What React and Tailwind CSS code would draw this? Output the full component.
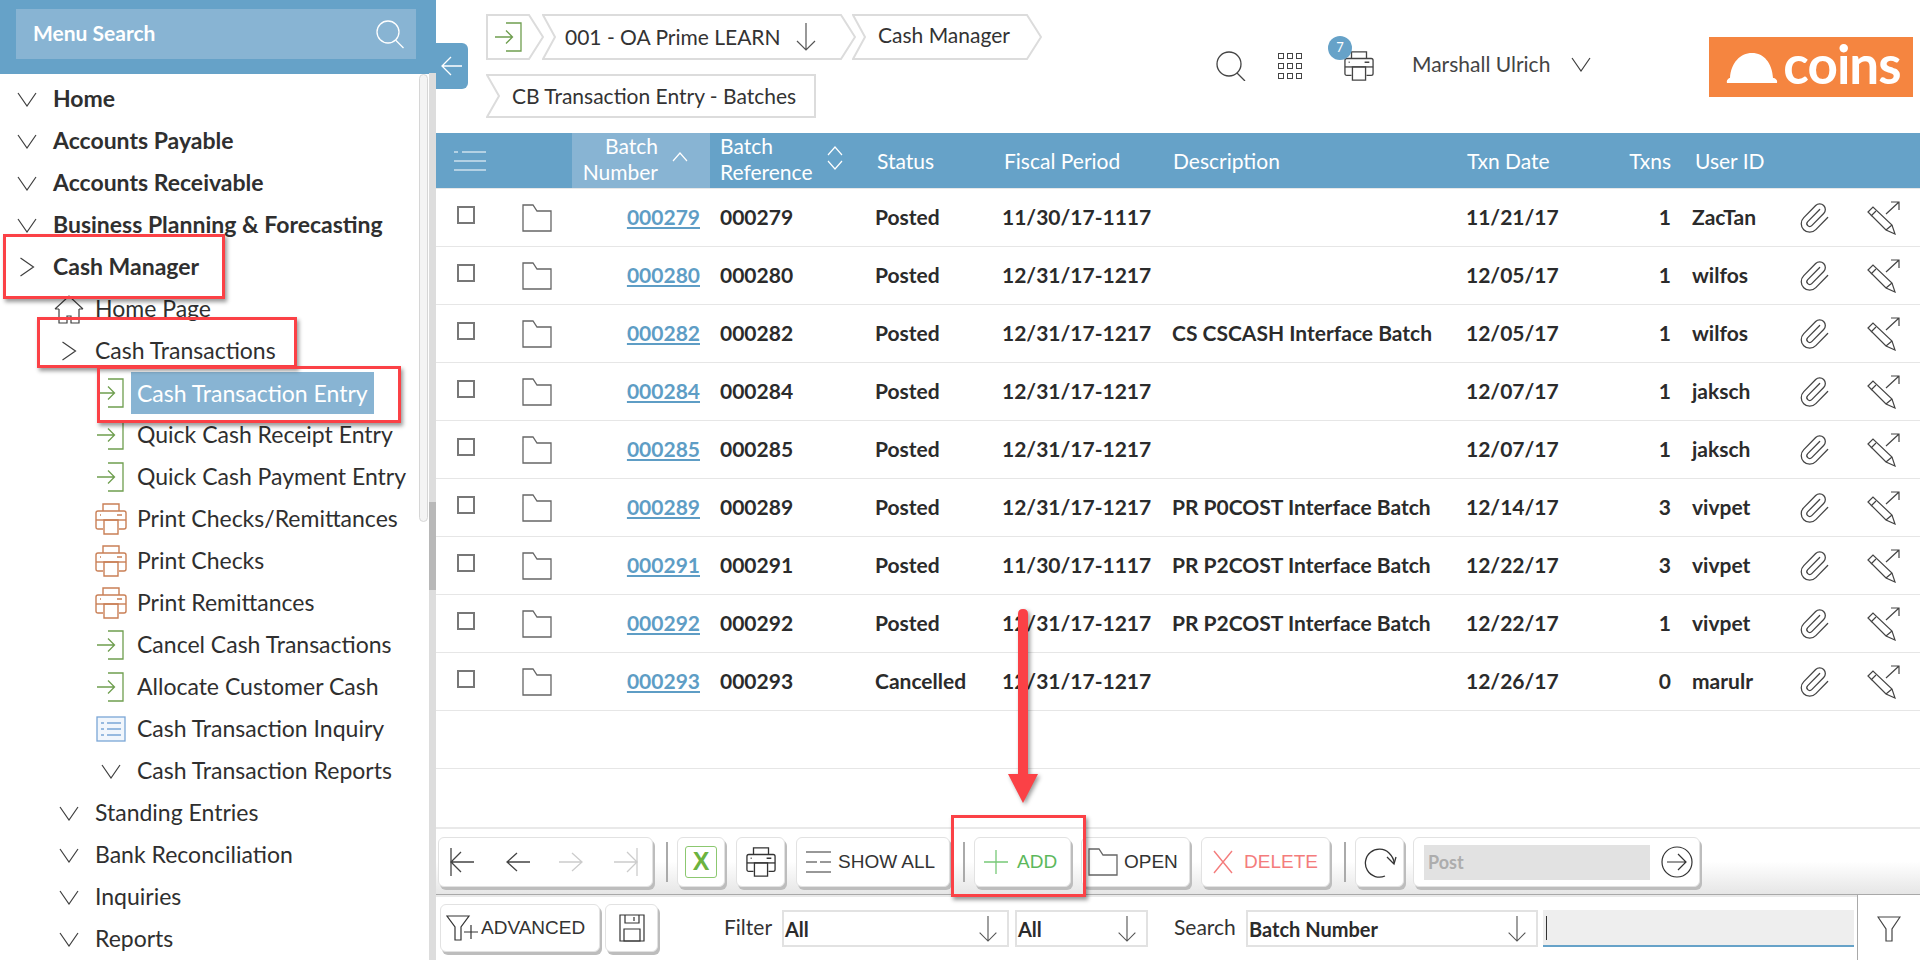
import { Paperclip } from "lucide-react";

const lato = { fontFamily: "Lato, sans-serif" };

function Chevron({ dir = "down", className = "" }) {
  if (dir === "right") {
    return (
      <svg width="16" height="20" viewBox="0 0 16 20" className={className} fill="none" stroke="#3f3f3f" strokeWidth="1.2">
        <path d="M1.5 1 L14.5 10 L1.5 19" />
      </svg>
    );
  }
  return (
    <svg width="20" height="15" viewBox="0 0 20 15" className={className} fill="none" stroke="#3f3f3f" strokeWidth="1.2">
      <path d="M1 1 L10 14 L19 1" />
    </svg>
  );
}

function EnterIcon() {
  return (
    <svg width="30" height="30" viewBox="0 0 30 30" fill="none" stroke="#6f9e4f" strokeWidth="1.3">
      <path d="M12 1 H27 V29 H12" />
      <path d="M1 15 H18 M12 8.5 L18.5 15 L12 21.5" />
    </svg>
  );
}

function PrinterIcon({ color = "#c97f55", size = 32 }) {
  return (
    <svg width={size} height={size} viewBox="0 0 32 32" fill="none" stroke={color} strokeWidth="1.4">
      <path d="M8 8 V1 H24 V8" />
      <path d="M8 26 H3 Q1 26 1 24 V10 Q1 8 3 8 H29 Q31 8 31 10 V24 Q31 26 29 26 H24" />
      <path d="M9 17 H23 V31 H9 Z" />
      <path d="M1 17 H31" />
      <path d="M5 12 H6 M22 12 H27" />
    </svg>
  );
}

function ListIcon() {
  return (
    <svg width="30" height="26" viewBox="0 0 30 26" fill="#f1f6fc" stroke="#7aa6d6" strokeWidth="1.3">
      <rect x="1" y="1" width="28" height="24" />
      <path d="M5 7 H8 M11 7 H25 M5 13 H8 M11 13 H25 M5 19 H8 M11 19 H25" />
    </svg>
  );
}

function HouseIcon() {
  return (
    <svg width="30" height="29" viewBox="0 0 30 29" fill="none" stroke="#3f3f3f" strokeWidth="1.2">
      <path d="M1 14 L15 1 L29 14 M1 14 H5 M25 14 H29" />
      <path d="M5 14 V28 H13 V21 H17 V28 H25 V14" />
    </svg>
  );
}

function FolderIcon({ w = 30, h = 28, color = "#666" }) {
  return (
    <svg width={w} height={h} viewBox="0 0 30 28" fill="none" stroke={color} strokeWidth="1.3" preserveAspectRatio="none">
      <path d="M1 1 H11 L15 7 H29 V27 H1 Z" />
    </svg>
  );
}

function PencilIcon() {
  return (
    <svg width="34" height="34" viewBox="0 0 34 34" fill="none" stroke="#444" strokeWidth="1.2">
      <path d="M20 13 L33 1 M25 1 H33 V9" />
      <path d="M2 11 L7 6 L26 24 L29 33 L20 29 Z" />
      <path d="M5 15 L10 10 M20 29 L26 24" />
    </svg>
  );
}

function DownArrow({ w = 20, h = 28 }) {
  return (
    <svg width={w} height={h} viewBox="0 0 20 28" fill="none" stroke="#555" strokeWidth="1.2">
      <path d="M10 0 V27 M1 18 L10 27 L19 18" />
    </svg>
  );
}

function HArrow({ dir = "left", bar = false, color = "#444" }) {
  return (
    <svg width="26" height="30" viewBox="0 0 26 30" fill="none" stroke={color} strokeWidth="1.3" className={dir === "right" ? "-scale-x-100" : ""}>
      {bar && <path d="M2 1 V29" />}
      <path d={bar ? "M2 15 H25 M12 5 L2 15 L12 25" : "M2 15 H25 M12 6 L2 15 L12 24"} />
    </svg>
  );
}

function Crumb({ w, h, notch = true, point = true, children, className = "" }) {
  const t = w - 1;
  const b = h - 1;
  const m = h / 2;
  const right = point ? `L${w - 15} 1 L${t} ${m} L${w - 15} ${b}` : `L${t} 1 L${t} ${b}`;
  const left = notch ? `L1 ${b} L13 ${m}` : `L1 ${b}`;
  return (
    <div className={`relative flex items-center shrink-0 ${className}`} style={{ width: w, height: h }}>
      <svg width={w} height={h} className="absolute inset-0" fill="none" stroke="#dcdcdc" strokeWidth="2">
        <path d={`M1 1 ${right} ${left} Z`} />
      </svg>
      <div className="relative flex items-center w-full">{children}</div>
    </div>
  );
}

const menu = [
  { label: "Home", level: 0, icon: "down", bold: true },
  { label: "Accounts Payable", level: 0, icon: "down", bold: true },
  { label: "Accounts Receivable", level: 0, icon: "down", bold: true },
  { label: "Business Planning & Forecasting", level: 0, icon: "down", bold: true },
  { label: "Cash Manager", level: 0, icon: "right", bold: true },
  { label: "Home Page", level: 1, icon: "house" },
  { label: "Cash Transactions", level: 1, icon: "right" },
  { label: "Cash Transaction Entry", level: 2, icon: "enter", active: true },
  { label: "Quick Cash Receipt Entry", level: 2, icon: "enter" },
  { label: "Quick Cash Payment Entry", level: 2, icon: "enter" },
  { label: "Print Checks/Remittances", level: 2, icon: "print" },
  { label: "Print Checks", level: 2, icon: "print" },
  { label: "Print Remittances", level: 2, icon: "print" },
  { label: "Cancel Cash Transactions", level: 2, icon: "enter" },
  { label: "Allocate Customer Cash", level: 2, icon: "enter" },
  { label: "Cash Transaction Inquiry", level: 2, icon: "list" },
  { label: "Cash Transaction Reports", level: 2, icon: "down" },
  { label: "Standing Entries", level: 1, icon: "down" },
  { label: "Bank Reconciliation", level: 1, icon: "down" },
  { label: "Inquiries", level: 1, icon: "down" },
  { label: "Reports", level: 1, icon: "down" },
];

const rows = [
  ["000279", "Posted", "11/30/17-1117", "", "11/21/17", "1", "ZacTan"],
  ["000280", "Posted", "12/31/17-1217", "", "12/05/17", "1", "wilfos"],
  ["000282", "Posted", "12/31/17-1217", "CS CSCASH Interface Batch", "12/05/17", "1", "wilfos"],
  ["000284", "Posted", "12/31/17-1217", "", "12/07/17", "1", "jaksch"],
  ["000285", "Posted", "12/31/17-1217", "", "12/07/17", "1", "jaksch"],
  ["000289", "Posted", "12/31/17-1217", "PR P0COST Interface Batch", "12/14/17", "3", "vivpet"],
  ["000291", "Posted", "11/30/17-1117", "PR P2COST Interface Batch", "12/22/17", "3", "vivpet"],
  ["000292", "Posted", "12/31/17-1217", "PR P2COST Interface Batch", "12/22/17", "1", "vivpet"],
  ["000293", "Cancelled", "12/31/17-1217", "", "12/26/17", "0", "marulr"],
];

function MenuIcon({ icon }) {
  if (icon === "down") return <Chevron />;
  if (icon === "right") return <Chevron dir="right" />;
  if (icon === "house") return <HouseIcon />;
  if (icon === "enter") return <EnterIcon />;
  if (icon === "print") return <PrinterIcon />;
  return <ListIcon />;
}

function Sidebar() {
  return (
    <aside className="relative w-[436px] h-full shrink-0 overflow-hidden">
      <div className="h-[74px] bg-[#66a2c8] pt-[9px] pl-4">
        <div className="flex items-center justify-between w-[400px] h-[50px] bg-[#88b4d3] pl-[17px] pr-3">
          <span className="text-[21px] font-bold text-white -mt-[2px]">Menu Search</span>
          <svg width="28" height="29" viewBox="0 0 28 29" fill="none" stroke="#fff" strokeWidth="1.3">
            <circle cx="12" cy="12" r="11" />
            <path d="M19.5 20 L27.5 28" />
          </svg>
        </div>
      </div>
      <div className="pt-1">
        {menu.map((m) => (
          <div
            key={m.label}
            className={`flex items-center h-[42px] text-[#2f2f2f] ${m.level === 1 ? "ml-[42px]" : m.level === 2 ? "ml-[84px]" : ""}`}
          >
            <div className="w-[53px] flex justify-center shrink-0">
              <MenuIcon icon={m.icon} />
            </div>
            {m.active ? (
              <span className="-ml-[6px] flex items-center h-[42px] px-[6px] bg-[#88b4d3] text-white text-[23px]">{m.label}</span>
            ) : (
              <span className={m.bold ? "text-[23px] font-bold whitespace-nowrap -mt-px" : "text-[23px] whitespace-nowrap -mt-px"}>{m.label}</span>
            )}
          </div>
        ))}
      </div>
      <div className="absolute right-0 top-[73px] bottom-0 w-[7px] bg-[#dddddd]">
        <div className="absolute top-[429px] w-full h-[88px] bg-[#b8b8b8]" />
      </div>
      <div className="absolute left-[419px] top-[74px] w-[9px] h-[448px] rounded-full bg-[#f4f4f4] border border-[#d6d6d6]" />
    </aside>
  );
}

function TopBar() {
  return (
    <div className="relative h-[133px] shrink-0">
      <div className="absolute left-0 top-[43px] w-8 h-[46px] rounded-r-md bg-[#66a2c8] flex items-center justify-center">
        <svg width="22" height="22" viewBox="0 0 22 22" fill="none" stroke="#fff" strokeWidth="1.3">
          <path d="M1 11 H21 M10 2 L1 11 L10 20" />
        </svg>
      </div>
      <div className="flex pt-[14px] pl-[50px]">
        <div className="w-[606px] flex flex-col gap-[14px]">
          <div className="flex h-[46px]">
            <Crumb w={58} h={46} notch={false}>
              <div className="ml-2"><EnterIcon /></div>
            </Crumb>
            <Crumb w={314} h={46} className="-ml-[2px]">
              <span className="ml-[23px] text-[21px] text-[#333]">001 - OA Prime LEARN</span>
              <div className="ml-[15px]"><DownArrow /></div>
            </Crumb>
            <Crumb w={190} h={46} className="-ml-1">
              <span className="ml-[26px] -mt-1 text-[21px] text-[#333]">Cash Manager</span>
            </Crumb>
          </div>
          <Crumb w={330} h={44} point={false}>
            <span className="ml-[26px] -mt-[1px] text-[21px] text-[#333]">CB Transaction Entry - Batches</span>
          </Crumb>
        </div>
        <div className="flex items-start pt-[23px]">
          <svg width="30" height="30" viewBox="0 0 30 30" fill="none" stroke="#444" strokeWidth="1.3" className="ml-[124px] mt-[14px]">
            <circle cx="13" cy="13" r="12" />
            <path d="M21 22 L29 30" />
          </svg>
          <div className="ml-[32px] grid grid-cols-3 gap-x-[3px] gap-y-[4px] mt-[16px]">
            {[1, 2, 3, 4, 5, 6, 7, 8, 9].map((i) => (
              <div key={i} className="w-[6px] h-[6px] border border-[#444]" />
            ))}
          </div>
          <div className="relative ml-[42px] mt-[14px]">
            <PrinterIcon color="#444" size={30} />
            <div className="absolute -left-[16px] -top-[15px] w-6 h-6 rounded-full bg-[#66a2c8] flex items-center justify-center text-white text-[13px]">7</div>
          </div>
          <span className="ml-[38px] text-[21px] text-[#444] mt-[11px] whitespace-nowrap">Marshall Ulrich</span>
          <Chevron className="ml-[21px] mt-[20px]" />
          <div className="relative ml-[118px] w-[204px] h-[60px] bg-[#f58540] flex items-center text-white shrink-0">
            <svg width="52" height="30" viewBox="0 0 52 30" fill="#fff" className="ml-[17px] mt-[1px] shrink-0">
              <path d="M1 30 C0 27 3 25 4 25 C5 10 14 0 26 0 C38 0 46 10 47 25 C49 25 52 27 51 30 Z" />
            </svg>
            <span className="ml-[5px] text-[53px] font-bold leading-none tracking-[-1px] -mt-[8px]">coins</span>
          </div>
        </div>
      </div>
    </div>
  );
}

function Table() {
  return (
    <div className="h-[694px] shrink-0 overflow-hidden">
      <div className="flex items-center h-[55px] bg-[#66a2c8] text-white text-[21px] leading-[26px]">
        <div className="w-[60px] flex justify-center pl-[8px]">
          <svg width="36" height="20" viewBox="0 0 36 20" fill="none" stroke="#fff" strokeWidth="1.2">
            <path d="M2 1 H6 M10 1 H34 M2 10 H34 M2 19 H34" />
          </svg>
        </div>
        <div className="w-[76px]" />
        <div className="w-[138px] h-full bg-[#88b4d3] flex items-center justify-end pr-[22px]">
          <div className="text-right -mt-[3px]">Batch<br />Number</div>
          <svg width="16" height="10" viewBox="0 0 16 10" fill="none" stroke="#fff" strokeWidth="1.2" className="ml-[14px] mb-[8px]">
            <path d="M1 9 L8 1 L15 9" />
          </svg>
        </div>
        <div className="w-[165px] pl-[10px] flex items-center">
          <div className="-mt-[3px]">Batch<br />Reference</div>
          <svg width="16" height="24" viewBox="0 0 16 24" fill="none" stroke="#fff" strokeWidth="1.2" className="ml-[14px] mb-[5px]">
            <path d="M1 9 L8 1 L15 9 M1 15 L8 23 L15 15" />
          </svg>
        </div>
        <div className="w-[127px] pl-[2px]">Status</div>
        <div className="w-[170px] pl-[2px]">Fiscal Period</div>
        <div className="w-[294px] pl-[1px]">Description</div>
        <div className="w-[150px] pl-[1px]">Txn Date</div>
        <div className="w-[55px] text-right">Txns</div>
        <div className="w-[120px] pl-[24px]">User ID</div>
      </div>
      <div className="h-px bg-[#e8e8e8]" />
      {rows.map((r) => (
        <div key={r[0]} className="flex items-center h-[58px] border-b border-[#e6e6e6] text-[21px] font-bold text-[#2b2b2b]">
          <div className="w-[60px] flex justify-center -mt-[5px]">
            <div className="w-[18px] h-[18px] border-2 border-[#777]" />
          </div>
          <div className="w-[76px] pl-[26px] flex">
            <FolderIcon />
          </div>
          <div className="w-[138px] text-right pr-[10px] -mt-[2px]">
            <span className="text-[#5e9dc5] underline underline-offset-2">{r[0]}</span>
          </div>
          <div className="w-[165px] pl-[10px] -mt-[2px]">{r[0]}</div>
          <div className="w-[127px] -mt-[2px]">{r[1]}</div>
          <div className="w-[170px] -mt-[2px]">{r[2]}</div>
          <div className="w-[294px] whitespace-nowrap -mt-[2px]">{r[3]}</div>
          <div className="w-[150px] -mt-[2px]">{r[4]}</div>
          <div className="w-[55px] text-right -mt-[2px]">{r[5]}</div>
          <div className="w-[120px] pl-[21px] -mt-[2px]">{r[6]}</div>
          <div className="w-[46px] flex justify-center">
            <Paperclip size={34} strokeWidth={0.9} color="#444" />
          </div>
          <div className="pl-[29px] flex">
            <PencilIcon />
          </div>
        </div>
      ))}
      <div className="h-[58px] border-b border-[#e6e6e6]" />
    </div>
  );
}

const btn = "flex items-center h-[50px] shrink-0 bg-white rounded-md border border-[#e2e2e2] shadow-[2px_3px_0_#bdbdbd]";
const btnText = { fontFamily: '"Liberation Sans", sans-serif' };

function Separator({ className }) {
  return <div className={`w-[2px] h-10 bg-[#aaaaaa] shrink-0 ${className}`} />;
}

function Toolbar() {
  return (
    <div className="h-[68px] shrink-0 border-t-2 border-[#e9e9e9] pt-[8px] pl-[2px] bg-linear-to-b from-white from-50% to-[#e6e6e6] border-b border-b-[#a9a9a9] flex items-start">
      <div className={`${btn} w-[215px] pl-[10px]`}>
        <HArrow bar />
        <div className="ml-[30px]"><HArrow /></div>
        <div className="ml-[27px]"><HArrow dir="right" color="#ccc" /></div>
        <div className="ml-[29px]"><HArrow dir="right" bar color="#ccc" /></div>
      </div>
      <Separator className="ml-[13px] mt-[5px]" />
      <div className={`${btn} w-[48px] ml-[9px] justify-center`}>
        <div className="w-8 h-8 rounded-[3px] border border-[#8cc870] flex items-center justify-center text-[#6cb33f] text-[25px] font-bold" style={btnText}>X</div>
      </div>
      <div className={`${btn} w-[49px] ml-[11px] justify-center`}>
        <PrinterIcon color="#333" size={30} />
      </div>
      <div className={`${btn} w-[154px] ml-[11px] pl-[8px] text-[19px] text-[#333]`} style={btnText}>
        <svg width="27" height="27" viewBox="0 0 27 27" fill="none" stroke="#333" strokeWidth="1.2">
          <path d="M1 3 H26 M1 13 H12 M15 13 H26 M1 23 H26" />
        </svg>
        <span className="ml-[6px]">SHOW ALL</span>
      </div>
      <Separator className="ml-[13px] mt-[5px]" />
      <div className={`${btn} w-[97px] ml-[9px] pl-[9px] text-[19px] text-[#5cb85c]`} style={btnText}>
        <svg width="24" height="24" viewBox="0 0 24 24" fill="none" stroke="#77c977" strokeWidth="1.3">
          <path d="M12 0 V24 M0 12 H24" />
        </svg>
        <span className="ml-[9px]">ADD</span>
      </div>
      <div className={`${btn} w-[109px] ml-[10px] pl-[6px] text-[19px] text-[#333]`} style={btnText}>
        <FolderIcon />
        <span className="ml-[6px]">OPEN</span>
      </div>
      <div className={`${btn} w-[129px] ml-[11px] pl-[11px] text-[19px] text-[#f47c7c]`} style={btnText}>
        <svg width="20" height="24" viewBox="0 0 20 24" fill="none" stroke="#f47c7c" strokeWidth="1.4">
          <path d="M1 1 L19 23 M19 1 L1 23" />
        </svg>
        <span className="ml-[11px]">DELETE</span>
      </div>
      <Separator className="ml-[14px] mt-[5px]" />
      <div className={`${btn} w-[49px] ml-[9px] justify-center`}>
        <svg width="34" height="32" viewBox="0 0 34 32" fill="none" stroke="#333" strokeWidth="1.3">
          <path d="M22 30 A14 14 0 1 1 26 7 C29 10 31 13 31 17" />
          <path d="M24 11 L31 18 L33 11" />
        </svg>
      </div>
      <div className={`${btn} w-[287px] ml-[9px] pl-[10px]`}>
        <div className="w-[226px] h-[35px] bg-[#e2e2e2] flex items-center pl-1 text-[18px] text-[#adadad] font-bold">Post</div>
        <svg width="32" height="32" viewBox="0 0 32 32" fill="none" stroke="#333" strokeWidth="1.2" className="ml-[11px]">
          <circle cx="16" cy="16" r="15" />
          <path d="M6 16 H25 M17 8 L25 16 L17 24" />
        </svg>
      </div>
    </div>
  );
}

function Select({ label, className }) {
  return (
    <div className={`flex items-center justify-between h-[37px] shrink-0 border-2 border-[#e2e2e2] pl-[1px] pr-[9px] text-[20px] font-bold text-[#2b2b2b] ${className}`}>
      <span>{label}</span>
      <DownArrow w={20} h={26} />
    </div>
  );
}

function FilterBar() {
  return (
    <div className="h-[65px] shrink-0 flex">
      <div className="w-[1421px] shrink-0 border-t-2 border-[#e9e9e9] flex items-start">
        <div className={`${btn} w-[160px] !h-[48px] ml-[4px] mt-[7px] pl-[5px] text-[19px] text-[#333]`} style={btnText}>
          <svg width="32" height="28" viewBox="0 0 32 28" fill="none" stroke="#333" strokeWidth="1.2" className="shrink-0">
            <path d="M1 2 H23 L15 13 V26 H9 V13 Z" />
            <path d="M25 11 V25 M18 18 H32" />
          </svg>
          <span className="ml-[3px]">ADVANCED</span>
        </div>
        <div className={`${btn} w-[53px] !h-[48px] ml-[5px] mt-[7px] justify-center`}>
          <svg width="26" height="28" viewBox="0 0 26 28" fill="none" stroke="#333" strokeWidth="1.2">
            <path d="M1 1 H25 V27 H1 Z" />
            <path d="M6 1 V9 H20 V1 M15 3 V7 M5 15 H21 V27 H5 Z" />
          </svg>
        </div>
        <span className="w-[58px] ml-[66px] mt-[18px] text-[21px] text-[#333] leading-[24px]">Filter</span>
        <Select label="All" className="w-[227px] mt-[13px]" />
        <Select label="All" className="w-[133px] ml-[6px] mt-[13px]" />
        <span className="w-[72px] ml-[26px] mt-[18px] text-[21px] text-[#333] leading-[24px]">Search</span>
        <Select label="Batch Number" className="w-[292px] mt-[13px]" />
        <div className="w-[311px] h-[37px] ml-[5px] mt-[13px] bg-[#eeeeee] border-b-2 border-[#66a2c8] flex items-center pl-[3px]">
          <div className="w-px h-[24px] bg-[#333]" />
        </div>
      </div>
      <div className="flex-1 border-l border-[#a9a9a9] flex justify-center pt-[20px]">
        <svg width="24" height="28" viewBox="0 0 24 28" fill="none" stroke="#444" strokeWidth="1.2">
          <path d="M1 2 H23 L15 14 V26 H9 V14 Z" />
        </svg>
      </div>
    </div>
  );
}

const redBox = "absolute border-[3px] border-[#fb4146] shadow-[2px_3px_4px_rgba(0,0,0,0.4)] pointer-events-none";

export default function App() {
  return (
    <div className="relative flex w-[1920px] h-[960px] overflow-hidden bg-white" style={lato}>
      <Sidebar />
      <main className="flex-1 flex flex-col min-w-0 h-full">
        <TopBar />
        <Table />
        <Toolbar />
        <FilterBar />
      </main>

      {/* red annotations on top of the screenshot */}
      <div className={`${redBox} left-[3px] top-[234px] w-[222px] h-[65px]`} />
      <div className={`${redBox} left-[37px] top-[317px] w-[260px] h-[51px]`} />
      <div className={`${redBox} left-[97px] top-[366px] w-[304px] h-[57px]`} />
      <div className={`${redBox} left-[951px] top-[815px] w-[135px] h-[82px]`} />
      <svg width="44" height="204" viewBox="0 0 44 204" className="absolute left-[1001px] top-[605px] drop-shadow-[2px_2px_2px_rgba(0,0,0,0.4)]" fill="#fb4146">
        <path d="M17 9 Q17 4 22 4 Q27 4 27 9 V169 H37 L22 198 L7 169 H17 Z" />
      </svg>
    </div>
  );
}
